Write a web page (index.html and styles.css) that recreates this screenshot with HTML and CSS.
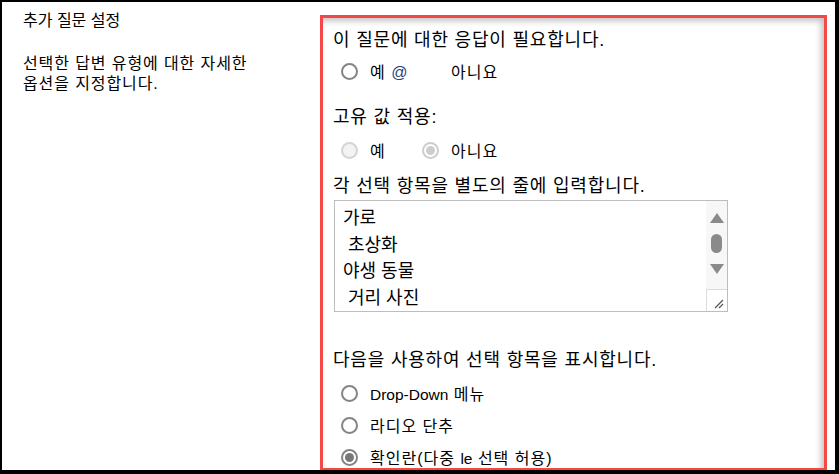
FILE: index.html
```html
<!DOCTYPE html>
<html lang="ko">
<head>
    <meta charset="UTF-8">
    <meta name="viewport" content="width=device-width, initial-scale=1.0">
    <title>추가 질문 설정</title>
    <link rel="stylesheet" href="styles.css">
</head>
<body>
    <div class="frame">
        <div class="side">
            <h2 class="side-title">추가 질문 설정</h2>
            <p class="side-desc">선택한 답변 유형에 대한 자세한<br>옵션을 지정합니다.</p>
        </div>

        <div class="panel">
            <p class="label">이 질문에 대한 응답이 필요합니다.</p>
            <div class="choices row-required">
                <span class="choice wide"><span class="radio"></span><span>예 <span class="at">@</span></span></span>
                <span class="choice"><span class="radio hidden"></span>아니요</span>
            </div>

            <p class="label unique-label">고유 값 적용:</p>
            <div class="choices row-unique">
                <span class="choice wide"><span class="radio disabled"></span>예</span>
                <span class="choice"><span class="radio disabled checked"></span>아니요</span>
            </div>

            <p class="label lines-label">각 선택 항목을 별도의 줄에 입력합니다.</p>
            <div class="textbox">
                <div class="textbox-text">가로
 초상화
야생 동물
 거리 사진</div>
                <div class="scrollbar">
                    <span class="arrow up"></span>
                    <span class="thumb"></span>
                    <span class="arrow down"></span>
                    <span class="grip">
                        <svg width="20" height="21" viewBox="0 0 20 21">
                            <path d="M8 18 L16 10 M12 18 L16 14" stroke="#555" stroke-width="1.2" fill="none"/>
                        </svg>
                    </span>
                </div>
            </div>

            <p class="label display-label">다음을 사용하여 선택 항목을 표시합니다.</p>
            <div class="display-list">
                <div class="choice"><span class="radio"></span><span><span class="latin">Drop-Down</span> 메뉴</span></div>
                <div class="choice"><span class="radio"></span><span>라디오 단추</span></div>
                <div class="choice"><span class="radio checked"></span><span>확인란(다중 <span class="latin">le</span> 선택 허용)</span></div>
            </div>
        </div>
    </div>
</body>
</html>
```

FILE: styles.css
```css
body {
    margin: 0;
    font-family: 'Liberation Sans', 'Noto Sans CJK KR', sans-serif;
    color: #000;
    background-color: #fff;
}

.frame {
    width: 839px;
    height: 474px;
    box-sizing: border-box;
    border: 2px solid #000;
    border-right-width: 4px;
    border-bottom-width: 4px;
    display: flex;
    overflow: hidden;
}

.side {
    width: 318px;
    flex-shrink: 0;
    box-sizing: border-box;
    padding: 9px 0 0 21px;
}

.side-title {
    margin: 0;
    font-size: 16px;
    font-weight: normal;
    line-height: 20px;
}

.side-desc {
    margin: 23px 0 0;
    font-size: 16px;
    line-height: 20px;
    letter-spacing: 0.9px;
}

.panel {
    width: 507px;
    height: 456px;
    flex-shrink: 0;
    margin-top: 13px;
    box-sizing: border-box;
    border: 3px solid #f64747;
    box-shadow: inset -6px 6px 6px -3px rgba(0, 0, 0, 0.24);
    padding: 10px 0 0 10px;
}

.label {
    margin: 0;
    font-size: 18px;
    line-height: 24px;
    letter-spacing: 0.8px;
    white-space: nowrap;
}

.unique-label {
    margin-top: 22px;
}

.lines-label {
    margin-top: 12px;
}

.display-label {
    margin-top: 36px;
}

.choices {
    display: flex;
    padding-left: 8px;
    height: 24px;
}

.row-required {
    margin-top: 7px;
}

.row-unique {
    margin-top: 9px;
}

.choice {
    display: flex;
    align-items: center;
    height: 24px;
    font-size: 16px;
    letter-spacing: 1px;
    white-space: nowrap;
}

.choice.wide {
    width: 81px;
}

.latin {
    letter-spacing: 0;
    font-size: 15.5px;
}

.at {
    color: #24407e;
}

.radio {
    width: 17px;
    height: 17px;
    box-sizing: border-box;
    border: 2px solid #848484;
    border-radius: 50%;
    background-color: #fff;
    margin-right: 12px;
    display: inline-flex;
    align-items: center;
    justify-content: center;
    flex-shrink: 0;
}

.radio.hidden {
    visibility: hidden;
}

.radio.disabled {
    border-color: #d4d4d4;
    background-color: #f3f3f3;
}

.radio.checked::after {
    content: '';
    width: 9px;
    height: 9px;
    border-radius: 50%;
    background-color: #787878;
}

.radio.disabled.checked {
    background-color: #fff;
    border-color: #cdcdcd;
}

.radio.disabled.checked::after {
    background-color: #cdcdcd;
}

.textbox {
    display: flex;
    width: 394px;
    height: 112px;
    margin: 2px 0 0 1px;
    box-sizing: border-box;
    border: 1px solid #bdbdbd;
    overflow: hidden;
}

.textbox-text {
    flex: 1;
    padding: 4px 0 0 8px;
    font-size: 18px;
    line-height: 26.5px;
    white-space: pre;
    overflow: hidden;
}

.scrollbar {
    width: 21px;
    flex-shrink: 0;
    display: flex;
    flex-direction: column;
    align-items: center;
    background-color: #f7f7f7;
}

.arrow {
    width: 0;
    height: 0;
    border-left: 7px solid transparent;
    border-right: 7px solid transparent;
}

.arrow.up {
    margin-top: 12px;
    border-bottom: 10px solid #8a8a8a;
}

.arrow.down {
    margin-top: 11px;
    border-top: 10px solid #8a8a8a;
}

.thumb {
    width: 11px;
    height: 19px;
    margin-top: 11px;
    border-radius: 6px;
    background-color: #8a8a8a;
}

.grip {
    margin-top: auto;
    width: 21px;
    height: 22px;
    box-sizing: border-box;
    border-top: 1px solid #dcdcdc;
    border-left: 1px solid #dcdcdc;
    background-color: #fff;
    display: block;
}

.grip svg {
    display: block;
}

.display-list {
    margin-top: 9px;
    padding-left: 8px;
    display: flex;
    flex-direction: column;
    gap: 8px;
}
```
